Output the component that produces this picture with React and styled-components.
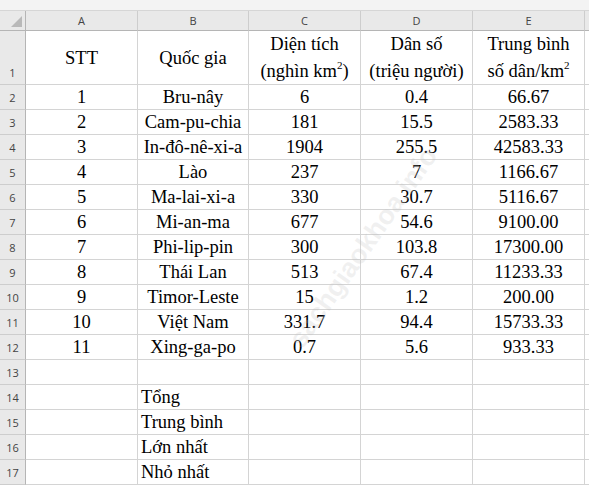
import React from "react";
import styled, { createGlobalStyle } from "styled-components";

const GlobalStyle = createGlobalStyle`
  html, body {
    margin: 0;
    padding: 0;
    background: #ffffff;
    overflow: hidden;
  }
`;

const COLS = ["A", "B", "C", "D", "E"];

const rows = [
  ["1", "Bru-nây", "6", "0.4", "66.67"],
  ["2", "Cam-pu-chia", "181", "15.5", "2583.33"],
  ["3", "In-đô-nê-xi-a", "1904", "255.5", "42583.33"],
  ["4", "Lào", "237", "7", "1166.67"],
  ["5", "Ma-lai-xi-a", "330", "30.7", "5116.67"],
  ["6", "Mi-an-ma", "677", "54.6", "9100.00"],
  ["7", "Phi-lip-pin", "300", "103.8", "17300.00"],
  ["8", "Thái Lan", "513", "67.4", "11233.33"],
  ["9", "Timor-Leste", "15", "1.2", "200.00"],
  ["10", "Việt Nam", "331.7", "94.4", "15733.33"],
  ["11", "Xing-ga-po", "0.7", "5.6", "933.33"],
];

const summary = ["", "Tổng", "Trung bình", "Lớn nhất", "Nhỏ nhất"];

const Page = styled.div`
  position: relative;
  width: 589px;
  height: 489px;
  overflow: hidden;
  background: #fff;
`;

const FormulaStrip = styled.div`
  height: 10px;
  background: #f3f3f3;
  border-bottom: 1px solid #d6d6d6;
`;

const Sheet = styled.div`
  display: grid;
  grid-template-columns: 26px 112px 111px 112px 112px 112px 20px;
  grid-template-rows: 20px 54px repeat(17, 25px);
`;

const Corner = styled.div`
  background: #e9e9e9;
  border-right: 1px solid #b5b5b5;
  border-bottom: 1px solid #b5b5b5;
  box-sizing: border-box;
  position: relative;
  &::after {
    content: "";
    position: absolute;
    right: 3px;
    bottom: 3px;
    border-style: solid;
    border-width: 0 0 11px 11px;
    border-color: transparent transparent #b9b9b9 transparent;
  }
`;

const ColHead = styled.div`
  background: #e9e9e9;
  border-right: 1px solid #cdcdcd;
  border-bottom: 1px solid #b5b5b5;
  box-sizing: border-box;
  display: flex;
  align-items: center;
  justify-content: center;
  font-family: "Open Sans", "DejaVu Sans", sans-serif;
  font-size: 11px;
  color: #444;
`;

const RowHead = styled.div`
  background: #e9e9e9;
  border-right: 1px solid #b5b5b5;
  border-bottom: 1px solid #cdcdcd;
  box-sizing: border-box;
  display: flex;
  align-items: flex-end;
  justify-content: center;
  padding-bottom: 4px;
  font-family: "Open Sans", "DejaVu Sans", sans-serif;
  font-size: 11px;
  line-height: 14px;
  color: #444;
`;

const Cell = styled.div`
  border-right: 1px solid #d4d4d4;
  border-bottom: 1px solid #d4d4d4;
  box-sizing: border-box;
  display: flex;
  flex-direction: column;
  align-items: ${(p) => (p.$left ? "flex-start" : "center")};
  justify-content: center;
  padding-left: ${(p) => (p.$left ? "3px" : "0")};
  font-family: "Liberation Serif", "Times New Roman", serif;
  font-size: 18.5px;
  line-height: ${(p) => (p.$tall ? "27px" : "22px")};
  color: #000;
  white-space: nowrap;
  overflow: hidden;
`;

const Sup = styled.sup`
  font-size: 11px;
  line-height: 0;
  vertical-align: 8px;
`;

const Watermark = styled.div`
  position: absolute;
  left: 245px;
  top: 232px;
  transform: rotate(-55deg);
  transform-origin: center;
  font-family: "Liberation Sans", Arial, sans-serif;
  font-weight: bold;
  font-size: 27px;
  color: rgba(190, 190, 190, 0.22);
  white-space: nowrap;
  pointer-events: none;
`;

export default function App() {
  return (
    <Page>
      <GlobalStyle />
      <FormulaStrip />
      <Sheet>
        <Corner />
        {COLS.map((c) => (
          <ColHead key={c}>{c}</ColHead>
        ))}
        <ColHead />

        <RowHead>1</RowHead>
        <Cell>STT</Cell>
        <Cell>Quốc gia</Cell>
        <Cell $tall>
          <span>Diện tích</span>
          <span>
            (nghìn km<Sup>2</Sup>)
          </span>
        </Cell>
        <Cell $tall>
          <span>Dân số</span>
          <span>(triệu người)</span>
        </Cell>
        <Cell $tall>
          <span>Trung bình</span>
          <span>
            số dân/km<Sup>2</Sup>
          </span>
        </Cell>
        <Cell />

        {rows.map((r, i) => (
          <React.Fragment key={i}>
            <RowHead>{i + 2}</RowHead>
            {r.map((v, j) => (
              <Cell key={j}>{v}</Cell>
            ))}
            <Cell />
          </React.Fragment>
        ))}

        {summary.map((label, i) => (
          <React.Fragment key={"s" + i}>
            <RowHead>{i + 13}</RowHead>
            <Cell />
            <Cell $left>{label}</Cell>
            <Cell />
            <Cell />
            <Cell />
            <Cell />
          </React.Fragment>
        ))}
      </Sheet>
      <Watermark>sachgiaokhoa.info</Watermark>
    </Page>
  );
}
